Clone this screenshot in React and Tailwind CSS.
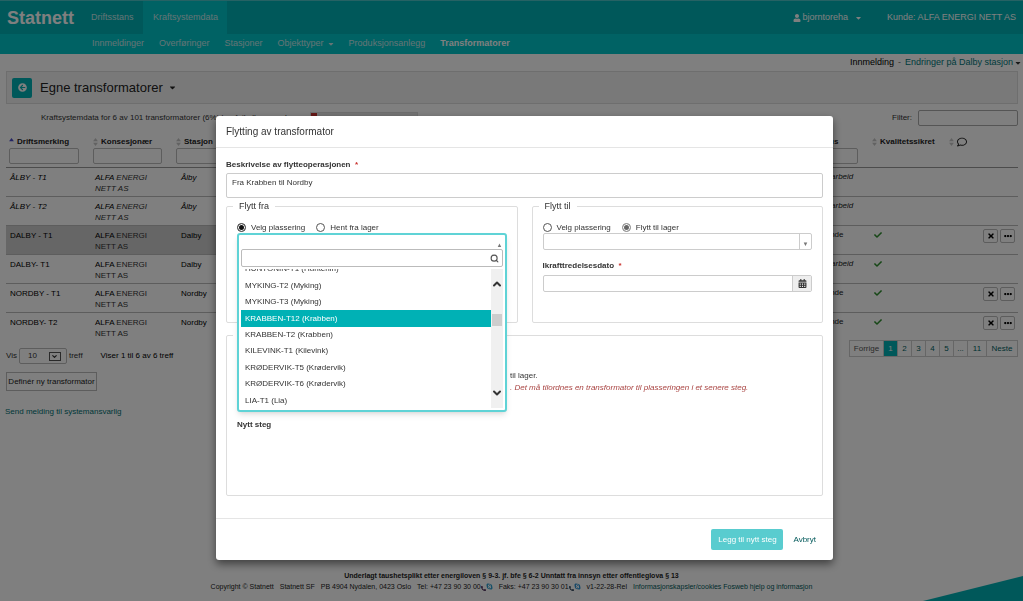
import { useState } from 'react'
import clsx from 'clsx'
import { ChevronDown, ChevronUp, Search } from 'lucide-react'
import { FaArrowCircleLeft, FaCalendarAlt, FaCaretDown, FaCheck, FaEllipsisH, FaPhoneAlt, FaRegComment, FaSkype, FaTimes, FaUser } from 'react-icons/fa'

const SUBNAV = [
  { label: 'Innmeldinger' },
  { label: 'Overføringer' },
  { label: 'Stasjoner' },
  { label: 'Objekttyper', caret: true },
  { label: 'Produksjonsanlegg' },
  { label: 'Transformatorer', active: true },
]

const ROWS = [
  { id: 1, name: 'ÅLBY - T1', station: 'Ålby', status: 'Under arbeid', draft: true },
  { id: 2, name: 'ÅLBY - T2', station: 'Ålby', status: 'Under arbeid', draft: true },
  { id: 3, name: 'DALBY - T1', station: 'Dalby', status: 'Gjeldende', ok: true, actions: true, selected: true },
  { id: 4, name: 'DALBY- T1', station: 'Dalby', status: 'Under arbeid', ok: true },
  { id: 5, name: 'NORDBY - T1', station: 'Nordby', status: 'Gjeldende', ok: true, actions: true },
  { id: 6, name: 'NORDBY- T2', station: 'Nordby', status: 'Gjeldende', ok: true, actions: true },
]

const OPTIONS = [
  'HUNTONIN-T1 (Huntenin)',
  'MYKING-T2 (Myking)',
  'MYKING-T3 (Myking)',
  'KRABBEN-T12 (Krabben)',
  'KRABBEN-T2 (Krabben)',
  'KILEVINK-T1 (Kilevink)',
  'KRØDERVIK-T5 (Krødervik)',
  'KRØDERVIK-T6 (Krødervik)',
  'LIA-T1 (Lia)',
]

const PAGES = ['1', '2', '3', '4', '5', '...', '11']

function SortIcon({ active }) {
  return (
    <svg viewBox="0 0 6 10" className="w-[5px] h-2 shrink-0">
      <path d="M3 0 6 4H0Z" fill={active ? '#4a4ac8' : '#c4c4c4'} />
      {!active && <path d="M3 10 0 6h6Z" fill="#c4c4c4" />}
    </svg>
  )
}

function HeadCell({ label, active, filter, inputClass }) {
  return (
    <th className="p-0 pl-[3px] align-top text-left font-bold">
      <div className="flex items-center gap-[3px] h-[13px] whitespace-nowrap">
        <SortIcon active={active} />
        {label}
      </div>
      {filter && <input aria-label={label} className={clsx('block h-4 border border-[#bbb] rounded-[2px]', inputClass)} />}
    </th>
  )
}

function Header() {
  return (
    <header>
      <div className="flex items-center h-[34px] bg-[#00b1b5] border-t border-[#4cc4c8] text-[9px] text-[#c9e8e9]">
        <a href="#" className="pl-[7px] w-[91px] text-[18px] leading-5 font-bold text-white">Statnett</a>
        <a href="#" className="w-[52px]">Driftsstans</a>
        <a href="#" className="flex items-center self-stretch px-[10px] bg-[#00c5c9] w-[84px]">Kraftsystemdata</a>
        <div className="ml-auto flex items-center text-white pr-[7px]">
          <button className="flex items-center gap-[2px] mr-[25px]">
            <FaUser className="w-2 h-2" />
            bjorntoreha
            <FaCaretDown className="ml-[5px] w-[7px] h-2" />
          </button>
          <span>Kunde: ALFA ENERGI NETT AS</span>
        </div>
      </div>
      <nav className="flex items-center gap-[15px] h-5 pl-[92px] bg-[#00c5c9] text-[9px] text-[#c9e8e9]">
        {SUBNAV.map((item) => (
          <a key={item.label} href="#" className={clsx('flex items-center gap-1', item.active && 'font-bold text-white')}>
            {item.label}
            {item.caret && <FaCaretDown className="w-[6px] h-2" />}
          </a>
        ))}
      </nav>
    </header>
  )
}

function TransformerTable() {
  return (
    <table className="w-full table-fixed border-collapse text-[8px] leading-[11px] text-black">
      <colgroup>
        <col className="w-[84px]" />
        <col className="w-[83px]" />
        <col className="w-[87px]" />
        <col />
        <col className="w-[66px]" />
        <col className="w-[77px]" />
        <col className="w-[30px]" />
        <col className="w-[42px]" />
      </colgroup>
      <thead>
        <tr className="h-8 border-b border-[#999] text-[#222]">
          <HeadCell label="Driftsmerking" active filter inputClass="w-[70px]" />
          <HeadCell label="Konsesjonær" filter inputClass="w-[69px]" />
          <HeadCell label="Stasjon" filter inputClass="w-[70px]" />
          <th />
          <HeadCell label="Status" filter inputClass="w-[52px]" />
          <HeadCell label="Kvalitetssikret" />
          <HeadCell label={<FaRegComment aria-label="Kommentar" className="w-[10px] h-[10px]" />} />
          <th />
        </tr>
      </thead>
      <tbody>
        {ROWS.map((row) => {
          const shade = row.selected && 'bg-[#cdcdcd]'
          return (
            <tr key={row.id} className={clsx('h-[29px] align-top', row.id < ROWS.length && 'border-b border-[#bbb]')}>
              <td className={clsx('p-0 pt-1 pl-1', shade, row.draft && 'italic')}>{row.name}</td>
              <td className={clsx('p-0 pt-1 pl-[5px] text-[#333]', shade, row.draft && 'italic')}>
                <span className="text-black">ALFA</span> ENERGI
                <br />
                NETT AS
              </td>
              <td className={clsx('p-0 pt-1 pl-2', shade, row.draft && 'italic')}>{row.station}</td>
              <td />
              <td className={clsx('p-0 pt-[3px] pl-1 whitespace-nowrap text-[#222]', row.status === 'Under arbeid' && 'italic')}>{row.status}</td>
              <td className="p-0 pt-[5px] pl-[5px]">{row.ok && <FaCheck className="w-2 h-2 text-[#2f8f2f]" />}</td>
              <td />
              <td className="p-0 pt-[3px]">
                {row.actions && (
                  <div className="flex justify-end gap-[2px] pr-[3px]">
                    <button aria-label="Slett" className="flex items-center justify-center w-[15px] h-[14px] border border-[#bbb] rounded-[2px]">
                      <FaTimes className="w-2 h-2" />
                    </button>
                    <button aria-label="Mer" className="flex items-center justify-center w-[15px] h-[14px] border border-[#bbb] rounded-[2px]">
                      <FaEllipsisH className="w-2 h-2" />
                    </button>
                  </div>
                )}
              </td>
            </tr>
          )
        })}
      </tbody>
    </table>
  )
}

function Page() {
  return (
    <div className="relative min-h-screen flex flex-col bg-white overflow-hidden">
      <Header />
      <div className="flex justify-end items-center gap-1 h-[17px] pr-[2px] text-[9px] text-black">
        <span>Innmelding</span>
        <span className="text-[#666]">-</span>
        <a href="#" className="flex items-center gap-[2px] text-[#00777a]">
          Endringer på Dalby stasjon
          <FaCaretDown className="w-[6px] h-2 text-[#333]" />
        </a>
      </div>

      <main className="pl-[6px] pr-[5px]">
        <div className="flex items-center h-[33px] pl-[5px] gap-2 bg-[#f3f3f3] border border-[#ddd]">
          <button aria-label="Tilbake" className="flex items-center justify-center w-5 h-5 bg-[#00b1b5] rounded-[2px] text-white">
            <FaArrowCircleLeft className="w-[9px] h-[9px]" />
          </button>
          <h1 className="flex items-center gap-[6px] text-[13px] leading-4 text-[#222]">
            Egne transformatorer
            <FaCaretDown className="w-[7px] h-[9px]" />
          </h1>
        </div>

        <div className="flex items-center h-[27px] mb-[4px] pl-[35px] text-[8px] text-[#333]">
          <span>Kraftsystemdata for 6 av 101 transformatorer (6%) har feil eller mangler</span>
          <div className="ml-4 flex w-[108px] h-3 bg-[#e8e8e8] border border-[#ddd]">
            <div className="w-[6%] bg-[#c9302c]" />
          </div>
          <label className="ml-auto flex items-center gap-[6px]">
            Filter:
            <input className="w-[100px] h-4 border border-[#aaa] rounded-[2px]" />
          </label>
        </div>

        <TransformerTable />

        <div className="flex items-start justify-between text-[8px] text-[#333]">
          <div className="flex items-center mt-[7px]">
            <label className="flex items-center gap-[2px]">
              Vis
              <span className="relative flex items-center">
                <select className="appearance-none w-12 h-4 pl-2 border border-[#bbb] rounded-[2px]">
                  <option>10</option>
                </select>
                <span className="absolute right-[6px] flex items-center justify-center w-3 h-[9px] border border-[#555] pointer-events-none">
                  <ChevronDown className="w-[7px] h-[7px]" strokeWidth={4} />
                </span>
              </span>
              treff
            </label>
            <span className="ml-[18px] text-black">Viser 1 til 6 av 6 treff</span>
          </div>
          <nav aria-label="Sider" className="flex items-stretch h-[17px] -mt-px border border-[#ccc] text-[#005f62]">
            <button className="w-[33px] text-[#555]">Forrige</button>
            {PAGES.map((p) => (
              <button key={p} className={clsx('border-l border-[#ccc]', p === '11' ? 'w-[19px]' : 'w-[14px]', p === '1' && 'bg-[#00b1b5] text-white')}>{p}</button>
            ))}
            <button className="w-[31px] border-l border-[#ccc]">Neste</button>
          </nav>
        </div>

        <button className="mt-2 h-[19px] w-[91px] border border-[#bbb] text-[8px] text-[#222] whitespace-nowrap">Definér ny transformator</button>
      </main>
      <a href="#" className="mt-4 pl-[5px] text-[8px] leading-[10px] text-[#007073] self-start">Send melding til systemansvarlig</a>

      <footer className="mt-auto pb-[9px] text-center text-[#222]">
        <p className="text-[7px] leading-[11px] font-bold">Underlagt taushetsplikt etter energiloven § 9-3. jf. bfe § 6-2 Unntatt fra innsyn etter offentleglova § 13</p>
        <div className="flex justify-center items-center gap-[6px] text-[7px] leading-[11px]">
          <span>Copyright © Statnett</span>
          <span>Statnett SF</span>
          <span>PB 4904 Nydalen, 0423 Oslo</span>
          <span className="flex items-center">
            Tel: +47 23 90 30 00
            <FaPhoneAlt className="w-[5px] h-[5px] mt-1 text-[#402050]" />
            <FaSkype className="w-[7px] h-[7px] text-[#2a9fd0]" />
          </span>
          <span className="flex items-center">
            Faks: +47 23 90 30 01
            <FaPhoneAlt className="w-[5px] h-[5px] mt-1 text-[#203850]" />
            <FaSkype className="w-[7px] h-[7px] text-[#2a8fd0]" />
          </span>
          <span>v1-22-28-Rel</span>
          <a href="#" className="text-[#00585a]">Informasjonskapsler/cookies Fosweb hjelp og informasjon</a>
        </div>
      </footer>
      <svg viewBox="0 0 100 25" className="absolute right-0 bottom-0 w-[100px] h-[25px]">
        <path d="M0 25 100 0V25Z" fill="#00b1b5" />
      </svg>
    </div>
  )
}

function Radio({ name, label, checked, onChange, muted }) {
  return (
    <label className="flex items-center gap-[5px]">
      <input
        type="radio"
        name={name}
        checked={checked}
        onChange={onChange}
        className={clsx(
          'appearance-none w-[9px] h-[9px] rounded-full border bg-white checked:shadow-[inset_0_0_0_1px_white]',
          muted ? 'border-[#999] checked:bg-[#666]' : 'border-[#555] checked:bg-[#111]'
        )}
      />
      {label}
    </label>
  )
}

function PlacementDropdown() {
  const [selected, setSelected] = useState('KRABBEN-T12 (Krabben)')

  return (
    <div className="absolute top-0 left-0 right-0 z-10 pt-[14px] px-[2px] pb-[2px] bg-white border-2 border-[#5fd3d6] rounded-[3px] shadow-md">
      <span className="absolute right-[2px] top-[7px] text-[6px] leading-[6px] text-[#777]">▲</span>
      <div className="relative flex items-center">
        <input aria-label="Søk plassering" className="w-full h-[18px] px-1 border border-[#bbb] rounded-[2px]" />
        <Search className="absolute right-1 w-[9px] h-[9px] text-[#555]" strokeWidth={3} />
      </div>
      <div className="flex h-[139px] mt-[2px] overflow-hidden">
        <ul role="listbox" aria-label="Plassering" className="flex-1 flex flex-col h-[148px] -mt-2">
          {OPTIONS.map((o) => (
            <li
              key={o}
              role="option"
              aria-selected={o === selected}
              onClick={() => setSelected(o)}
              className={clsx('flex-1 flex items-center pl-1 cursor-pointer', o === selected && 'bg-[#00b1b5] text-white')}
            >
              {o}
            </li>
          ))}
        </ul>
        <div className="flex flex-col items-center justify-between w-3 py-[9px] bg-[#f0f0f0] text-[#333]">
          <ChevronUp className="w-3 h-3" strokeWidth={4} />
          <div className="w-[10px] h-3 mb-[38px] bg-[#cdcdcd]" />
          <ChevronDown className="w-3 h-3" strokeWidth={4} />
        </div>
      </div>
    </div>
  )
}

function MoveDialog() {
  const [from, setFrom] = useState('place')
  const [to, setTo] = useState('stock')

  return (
    <div role="dialog" aria-modal="true" aria-labelledby="dialog-title" className="flex-1 bg-white rounded-[3px] shadow-[0_4px_8px_rgba(0,0,0,0.5)] text-[8px] text-[#333]">
      <h2 id="dialog-title" className="flex items-center h-8 px-[10px] border-b border-[#e5e5e5] text-[10px]">Flytting av transformator</h2>

      <div className="px-[10px] pt-[11px] pb-[22px]">
        <label htmlFor="description" className="block mb-[3px] leading-[11px] font-bold">
          Beskrivelse av flytteoperasjonen&nbsp; <span className="text-[#c9302c]">*</span>
        </label>
        <textarea id="description" defaultValue="Fra Krabben til Nordby" className="block w-full h-[25px] px-[5px] py-[3px] leading-[11px] resize-none border border-[#ccc] rounded-[2px]" />

        <div className="grid grid-cols-2 gap-[14px] mt-[2px]">
          <fieldset className="h-[123px] px-[10px] border border-[#ddd] rounded-[2px]">
            <legend className="-ml-1 px-[6px] text-[9px] leading-3">Flytt fra</legend>
            <div className="flex items-center gap-[11px] mt-[10px] h-[11px]">
              <Radio name="from" label="Velg plassering" checked={from === 'place'} onChange={() => setFrom('place')} />
              <Radio name="from" label="Hent fra lager" checked={from === 'stock'} onChange={() => setFrom('stock')} />
            </div>
            <div className="relative">
              <PlacementDropdown />
            </div>
          </fieldset>

          <fieldset className="h-[123px] px-[10px] border border-[#ddd] rounded-[2px]">
            <legend className="-ml-1 px-[6px] text-[9px] leading-3">Flytt til</legend>
            <div className="flex items-center gap-[11px] mt-[10px] h-[11px]">
              <Radio name="to" label="Velg plassering" checked={to === 'place'} onChange={() => setTo('place')} />
              <Radio name="to" label="Flytt til lager" checked={to === 'stock'} onChange={() => setTo('stock')} muted />
            </div>
            <button aria-label="Plassering" className="flex w-full h-[17px] border border-[#ccc] rounded-[2px]">
              <span className="ml-auto flex items-end justify-center w-3 h-full pb-[2px] border-l border-[#ccc] text-[6px] leading-[6px] text-[#777]">▼</span>
            </button>
            <label htmlFor="start-date" className="block mt-[10px] mb-1 leading-[11px] font-bold">
              Ikrafttredelsesdato&nbsp; <span className="text-[#c9302c]">*</span>
            </label>
            <div className="flex h-[17px] border border-[#ccc] rounded-[2px]">
              <input id="start-date" className="flex-1 px-1" />
              <button aria-label="Velg dato" className="flex items-center justify-center w-[19px] bg-[#eee] border-l border-[#ccc]">
                <FaCalendarAlt className="w-[9px] h-[9px]" />
              </button>
            </div>
          </fieldset>
        </div>

        <fieldset aria-label="Steg" className="h-[167px] mt-[6px] px-[10px] border border-[#ddd] rounded-[2px]">
          <legend className="-ml-1 w-[120px] h-3" />
          <div className="pt-[29px] pl-[273px] leading-3 whitespace-nowrap">
            <p>til lager.</p>
            <p className="italic text-[#a94442]">. Det må tilordnes en transformator til plasseringen i et senere steg.</p>
          </div>
          <h3 className="mt-[25px] leading-3 font-bold">Nytt steg</h3>
        </fieldset>
      </div>

      <div className="flex items-center justify-end gap-[10px] h-[42px] pr-[17px] border-t border-[#e5e5e5]">
        <button className="w-[72px] h-[21px] bg-[#59cccf] rounded-[2px] text-white">Legg til nytt steg</button>
        <button className="text-[#00585a]">Avbryt</button>
      </div>
    </div>
  )
}

export default function App() {
  return (
    <div className="font-['Liberation_Sans',Arial,sans-serif]">
      <Page />
      <div className="fixed inset-0 z-20 flex items-start pt-[116px] pl-[216px] pr-[190px] bg-black/50">
        <MoveDialog />
      </div>
    </div>
  )
}
